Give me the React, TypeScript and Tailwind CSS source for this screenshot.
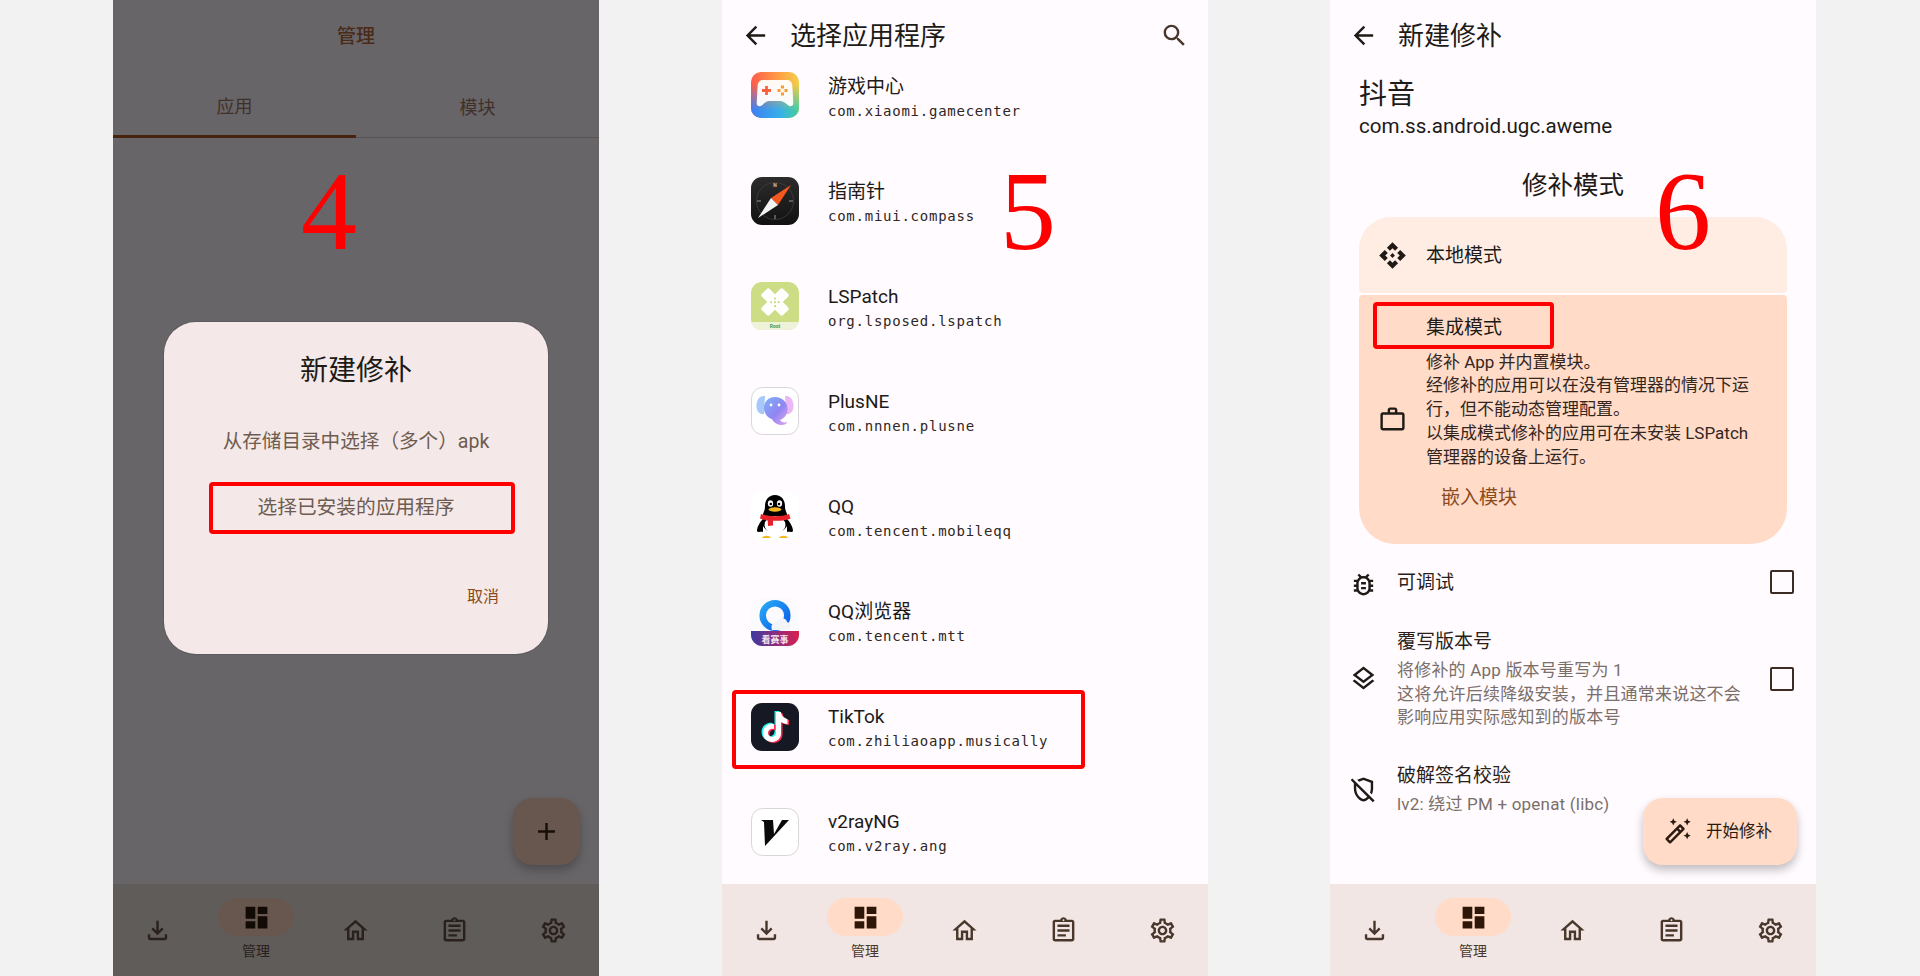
import type { FC, ReactNode } from 'react';
import {
  MdAdd,
  MdApi,
  MdArrowBack,
  MdDashboard,
  MdOutlineAssignment,
  MdOutlineAutoFixHigh,
  MdOutlineBugReport,
  MdOutlineFileDownload,
  MdOutlineHome,
  MdOutlineLayers,
  MdOutlineRemoveModerator,
  MdOutlineSettings,
  MdOutlineWorkOutline,
  MdSearch,
} from 'react-icons/md';

const GameIcon = () => (
  <svg viewBox="0 0 48 48" className="size-12">
    <defs>
      <linearGradient id="gameTop" x1="0" y1="0" x2="1" y2="0">
        <stop offset="0" stopColor="#ff5a4c" />
        <stop offset="0.55" stopColor="#ff9a45" />
        <stop offset="1" stopColor="#f3d04a" />
      </linearGradient>
      <linearGradient id="gameBottom" x1="0" y1="0" x2="1" y2="0">
        <stop offset="0" stopColor="#3c7ff6" />
        <stop offset="0.6" stopColor="#36b0ea" />
        <stop offset="1" stopColor="#46cf9c" />
      </linearGradient>
      <linearGradient id="gameFade" x1="0" y1="0" x2="0" y2="1">
        <stop offset="0.25" stopColor="#fff" stopOpacity="0" />
        <stop offset="0.8" stopColor="#fff" stopOpacity="1" />
      </linearGradient>
      <mask id="gameMask">
        <rect width="48" height="48" fill="url(#gameFade)" />
      </mask>
    </defs>
    <rect width="48" height="46" rx="10" fill="url(#gameTop)" />
    <rect width="48" height="46" rx="10" fill="url(#gameBottom)" mask="url(#gameMask)" />
    <path
      d="M12 8h24c3 0 5 2 5.300 5l1 18c.2 3-3 4-5 2.500-2.500-2-4-4-7.300-4.500h-12c-3.300.5-4.800 2.500-7.300 4.500-2 1.500-5.200.5-5-2.500l1-18C7 10 9 8 12 8z"
      fill="#fff"
      fillOpacity="0.95"
    />
    <path d="M15.500 14v9M11 18.500h9" stroke="#f9603f" strokeWidth="2.800" />
    <g fill="#ff9a2e">
      <rect x="30" y="13.500" width="3" height="3" />
      <rect x="30" y="20.500" width="3" height="3" />
      <rect x="26.500" y="17" width="3" height="3" />
      <rect x="33.500" y="17" width="3" height="3" />
    </g>
  </svg>
);

const CompassIcon = () => (
  <svg viewBox="0 0 48 48" className="size-12">
    <defs>
      <linearGradient id="compassBg" x1="0" y1="0" x2="0" y2="1">
        <stop offset="0" stopColor="#2c2c2c" />
        <stop offset="1" stopColor="#111" />
      </linearGradient>
    </defs>
    <rect width="48" height="48" rx="11" fill="url(#compassBg)" />
    <circle cx="24" cy="24" r="18.500" fill="none" stroke="#444" strokeWidth="0.700" />
    <path d="M6 24h4M38 24h4M24 38v4" stroke="#999" strokeWidth="1" />
    <text x="24" y="10" fontSize="5" fontWeight="700" fill="#ccc" textAnchor="middle" fontFamily="Roboto">
      N
    </text>
    <path d="M40 8 27 28 20 21z" fill="#f4581f" />
    <path d="M7 41 20 21 27 28z" fill="#f5f5f5" />
  </svg>
);

const LspatchIcon = () => (
  <svg viewBox="0 0 48 48" className="size-12">
    <rect width="48" height="48" rx="11" fill="#cddd86" />
    <path d="M0 40h48v-2c0 0 0 10-11 10H11C0 48 0 38 0 38z" fill="#eef2d8" />
    <rect x="18.500" y="5" width="11" height="30" rx="2" transform="rotate(45 24 20)" fill="#fff" />
    <rect x="18.500" y="5" width="11" height="30" rx="2" transform="rotate(-45 24 20)" fill="#fff" />
    <g fill="#cddd86">
      <rect x="23" y="15.500" width="2" height="2" />
      <rect x="23" y="23" width="2" height="2" />
      <rect x="19.200" y="19.200" width="2" height="2" />
      <rect x="26.800" y="19.200" width="2" height="2" />
      <rect x="23" y="19.200" width="2" height="2" />
    </g>
    <text x="24" y="46" fontSize="5" fontWeight="700" fill="#4a9a50" textAnchor="middle" fontFamily="Roboto">
      Root
    </text>
  </svg>
);

const PlusneIcon = () => (
  <svg viewBox="0 0 48 48" className="size-12">
    <defs>
      <linearGradient id="plusneBody" x1="0" y1="0" x2="1" y2="1">
        <stop offset="0" stopColor="#7fb2f5" />
        <stop offset="0.55" stopColor="#8f86f2" />
        <stop offset="1" stopColor="#e6a4ee" />
      </linearGradient>
    </defs>
    <rect x="0.500" y="0.500" width="47" height="47" rx="11" fill="#fff" stroke="#d8d6d8" />
    <path d="M14 9C8 8 5 14 5.500 20c.3 4 3 8 7.500 7z" fill="#a9c8fa" />
    <path d="M34 9c6-1 9 5 8.500 11-.3 4-3 8-7.500 7z" fill="#eab8f4" />
    <path
      d="M24 10c-7 0-11.500 5-11 12 .5 5 4 9 8 10 1 2.500 4 5.500 9 6 3 .3 6-1 6-3-3 1-6 0-7-2 5-2 7.500-6 7.500-11C36.500 15 31 10 24 10z"
      fill="url(#plusneBody)"
    />
    <circle cx="20" cy="18" r="1.400" fill="#fff" />
    <circle cx="28" cy="18" r="1.400" fill="#fff" />
  </svg>
);

const QqIcon = () => (
  <svg viewBox="0 0 48 48" className="size-12">
    <rect width="48" height="48" rx="11" fill="#fff" />
    <path d="M12 40c-2-1-5 1-6-1 0-4 3-9 6-12zM36 40c2-1 5 1 6-1 0-4-3-9-6-12z" fill="#000" />
    <path d="M24 3c-6.500 0-10 5-10 11 0 4-1 5-2 8v12c3 5 8 7 12 7s9-2 12-7V22c-1-3-2-4-2-8 0-6-3.500-11-10-11z" fill="#000" />
    <ellipse cx="24" cy="33" rx="10.500" ry="9" fill="#fff" />
    <ellipse cx="19.500" cy="11.500" rx="2.600" ry="3.300" fill="#fff" />
    <ellipse cx="28.500" cy="11.500" rx="2.600" ry="3.300" fill="#fff" />
    <circle cx="19.800" cy="12" r="1.300" fill="#000" />
    <circle cx="28" cy="12" r="1.300" fill="#000" />
    <ellipse cx="24" cy="17.500" rx="6.500" ry="2.200" fill="#f5b81f" />
    <path d="M10 22c8 3 20 3 28 0l1.500 4.500c-3 1.500-7 2-10 2.300H22v4.700l-5 .5-.3-5.500c-3-.5-5.500-1-7.700-2z" fill="#e8202a" />
    <path d="M11 46c1-3 8-3 9 0zM28 46c1-3 8-3 9 0z" fill="#f5b81f" />
  </svg>
);

const QqBrowserIcon = () => (
  <svg viewBox="0 0 48 48" className="size-12">
    <defs>
      <linearGradient id="qbRing" x1="0" y1="0" x2="1" y2="1">
        <stop offset="0" stopColor="#26a7f5" />
        <stop offset="1" stopColor="#0b5fe8" />
      </linearGradient>
      <linearGradient id="qbBand" x1="0" y1="0" x2="1" y2="0">
        <stop offset="0" stopColor="#3d3a9e" />
        <stop offset="0.5" stopColor="#8d2d80" />
        <stop offset="1" stopColor="#d91f4d" />
      </linearGradient>
    </defs>
    <rect width="48" height="48" rx="11" fill="#fbfafc" />
    <circle cx="24" cy="17.500" r="12.300" fill="none" stroke="url(#qbRing)" strokeWidth="6.500" />
    <path d="M21 32h15c5 0 5-7 0-8-1-5-8-5-10 0-3 .5-7 2-5 8z" fill="#f2f4f8" />
    <path d="M0 33h48v4c0 6-5 11-11 11H11C5 48 0 43 0 37z" fill="url(#qbBand)" />
    <text x="24" y="44.500" fontSize="9" fontWeight="700" fill="#fff" fillOpacity="0.9" textAnchor="middle" fontFamily="Noto Sans CJK SC">
      看赛事
    </text>
  </svg>
);

const TiktokIcon = () => {
  const note = 'M25 9h5c.5 4 3 6.500 6.500 7v5c-2.500 0-4.800-.8-6.500-2v11c0 5.500-4 9-9 9s-9-4-9-9c0-6 5.500-10 11-9v5c-3-1-6 1-6 4 0 2.300 1.800 4 4 4s4-1.800 4-4z';
  return (
    <svg viewBox="0 0 48 48" className="size-12">
      <rect width="48" height="48" rx="11" fill="#161823" />
      <path d={note} fill="#25f4ee" transform="translate(-1.500 -1)" />
      <path d={note} fill="#fe2c55" transform="translate(1.500 1)" />
      <path d={note} fill="#fff" />
    </svg>
  );
};

const V2rayIcon = () => (
  <svg viewBox="0 0 48 48" className="size-12">
    <rect x="0.500" y="0.500" width="47" height="47" rx="11" fill="#fff" stroke="#d8d6d8" />
    <path d="M10 12h12l1 14 8-14h7L14 38l-1-24z" fill="#0a0a0a" />
  </svg>
);

const apps: { name: string; pkg: string; icon: ReactNode }[] = [
  { name: '游戏中心', pkg: 'com.xiaomi.gamecenter', icon: <GameIcon /> },
  { name: '指南针', pkg: 'com.miui.compass', icon: <CompassIcon /> },
  { name: 'LSPatch', pkg: 'org.lsposed.lspatch', icon: <LspatchIcon /> },
  { name: 'PlusNE', pkg: 'com.nnnen.plusne', icon: <PlusneIcon /> },
  { name: 'QQ', pkg: 'com.tencent.mobileqq', icon: <QqIcon /> },
  { name: 'QQ浏览器', pkg: 'com.tencent.mtt', icon: <QqBrowserIcon /> },
  { name: 'TikTok', pkg: 'com.zhiliaoapp.musically', icon: <TiktokIcon /> },
  { name: 'v2rayNG', pkg: 'com.v2ray.ang', icon: <V2rayIcon /> },
];

interface BottomNavProps {
  dim?: boolean;
}

const BottomNav: FC<BottomNavProps> = ({ dim }) => {
  const iconColor = dim ? 'text-[#2a211c]' : 'text-[#4a372c]';
  return (
    <nav className={`flex h-[92px] shrink-0 justify-center pr-[2px] ${dim ? 'bg-[#605c5a]' : 'bg-[#f1e6e4]'}`}>
      <div className={`flex w-[99px] shrink-0 items-center justify-center ${iconColor}`}>
        <MdOutlineFileDownload size={29} />
      </div>
      <div className="flex w-[99px] shrink-0 flex-col items-center pt-[14px]">
        <div className={`flex h-[38px] w-[76px] items-center justify-center rounded-full ${dim ? 'bg-[#68574f] text-[#120a05]' : 'bg-[#ffdbc8] text-[#2e1708]'}`}>
          <MdDashboard size={29} />
        </div>
        <span className={`mt-[6px] text-[14px] leading-[18px] ${dim ? 'text-[#2a211c]' : 'text-[#4a372c]'}`}>管理</span>
      </div>
      <div className={`flex w-[99px] shrink-0 items-center justify-center ${iconColor}`}>
        <MdOutlineHome size={29} />
      </div>
      <div className={`flex w-[99px] shrink-0 items-center justify-center ${iconColor}`}>
        <MdOutlineAssignment size={29} />
      </div>
      <div className={`flex w-[99px] shrink-0 items-center justify-center ${iconColor}`}>
        <MdOutlineSettings size={29} />
      </div>
    </nav>
  );
};

const StepNumber: FC<{ value: string; className: string }> = ({ value, className }) => (
  <span className={`absolute top-[155px] font-['Liberation_Serif',serif] text-[112px] leading-[112px] text-[#ff0000] ${className}`}>{value}</span>
);

const ManagePanel = () => (
  <section className="relative flex h-[976px] w-[486px] shrink-0 flex-col bg-[#676568]">
    <header className="flex h-[72px] shrink-0 items-center justify-center pt-[2px] text-[19px] font-medium text-[#4a2a18]">管理</header>
    <div className="flex h-[66px] shrink-0 border-b border-[#575253] text-[18px] text-[#41302a]">
      <div className="-mb-px flex flex-1 items-center justify-center border-b-[3px] border-[#47220f] pt-[5px]">应用</div>
      <div className="flex flex-1 items-center justify-center pt-[5px]">模块</div>
    </div>
    <div className="flex-1" />
    <BottomNav dim />
    <StepNumber value="4" className="left-[188px]" />
    <div className="absolute top-[322px] left-[51px] flex h-[332px] w-[384px] flex-col items-center rounded-[32px] bg-[#f4e9e8] pt-[31px] shadow-[0_0_0_1px_#5d5a5d]">
      <h2 className="text-[28px] leading-[36px] text-[#201a17]">新建修补</h2>
      <p className="mt-[41px] text-[19.600px] leading-[24px] text-[#6e5c50]">从存储目录中选择（多个）apk</p>
      <p className="mt-[42px] text-[19.700px] leading-[24px] text-[#6e5c50]">选择已安装的应用程序</p>
      <span className="mt-[65px] mr-[49px] self-end text-[16px] leading-[24px] text-[#8b4a20]">取消</span>
      <div className="absolute top-[160px] left-[45px] h-[52px] w-[306px] rounded-[4px] border-4 border-[#ff0000]" />
    </div>
    <div className="absolute top-[798px] left-[400px] flex size-[67px] items-center justify-center rounded-[20px] bg-[#68574f] text-[#180e08] shadow-[0_5px_10px_rgba(0,0,0,0.25)]">
      <MdAdd size={29} />
    </div>
  </section>
);

const AppListPanel = () => (
  <section className="relative ml-[123px] flex h-[976px] w-[486px] shrink-0 flex-col bg-[#fffbff]">
    <header className="relative z-10 flex h-[70px] shrink-0 items-center justify-between pr-[19px] pl-[19px] text-[#201a17]">
      <div className="flex items-center gap-[20px]">
        <MdArrowBack size={29} />
        <h1 className="pt-[2px] text-[26px] leading-[34px]">选择应用程序</h1>
      </div>
      <MdSearch size={29} className="text-[#4a372c]" />
    </header>
    <div className="flex-1 overflow-hidden">
      <ul className="-mt-[25.500px]">
        {apps.map(app => (
          <li key={app.pkg} className="flex h-[105.100px] items-center gap-[29px] pl-[29px]">
            <div className="mb-[2px] size-12 shrink-0">{app.icon}</div>
            <div className="pt-[1px]">
              <div className="text-[19px] leading-[24px] text-[#201a17]">{app.name}</div>
              <div className="mt-[2px] font-['DejaVu_Sans_Mono',monospace] text-[14px] leading-[20px] tracking-[0.75px] text-[#2f2723]">{app.pkg}</div>
            </div>
          </li>
        ))}
      </ul>
    </div>
    <BottomNav />
    <StepNumber value="5" className="left-[278px]" />
    <div className="absolute top-[690px] left-[10px] h-[79px] w-[353px] rounded-[4px] border-4 border-[#ff0000]" />
  </section>
);

const OptionRow: FC<{ icon: ReactNode; title: string; lines?: string[]; checkbox?: boolean; className: string }> = ({ icon, title, lines, checkbox, className }) => (
  <div className={`flex items-center pr-[22px] pl-[19px] ${className}`}>
    <div className="shrink-0 text-[#201a17]">{icon}</div>
    <div className="ml-[19px] flex-1">
      <div className="text-[19px] leading-[24px] text-[#2b1f19]">{title}</div>
      {lines && (
        <div className="mt-[5px] text-[17px] leading-[23.700px] tracking-[0.2px] text-[#7a6f69]">
          {lines.map(line => (
            <div key={line}>{line}</div>
          ))}
        </div>
      )}
    </div>
    {checkbox && <div className="mb-[2px] size-[24px] shrink-0 rounded-[2px] border-[2.500px] border-[#3d2c24]" />}
  </div>
);

const integratedLines = ['修补 App 并内置模块。', '经修补的应用可以在没有管理器的情况下运', '行，但不能动态管理配置。', '以集成模式修补的应用可在未安装 LSPatch', '管理器的设备上运行。'];

const NewPatchPanel = () => (
  <section className="relative ml-[122px] flex h-[976px] w-[486px] shrink-0 flex-col bg-[#fffbff]">
    <header className="flex h-[70px] shrink-0 items-center gap-[20px] pl-[19px] text-[#201a17]">
      <MdArrowBack size={29} />
      <h1 className="pt-[2px] text-[26px] leading-[34px]">新建修补</h1>
    </header>
    <div className="flex-1 overflow-hidden">
      <div className="mt-[7px] pl-[29px] text-[#201a17]">
        <div className="text-[28px] leading-[36px]">抖音</div>
        <div className="text-[20.600px] leading-[27px]">com.ss.android.ugc.aweme</div>
      </div>
      <h2 className="mt-[27px] text-center text-[25.500px] leading-[36px] text-[#201a17]">修补模式</h2>
      <div className="mt-[14px] ml-[29px] flex h-[76px] w-[428px] items-center gap-[19px] rounded-t-[32px] rounded-b-[4px] bg-[#ffede4] pl-[19px] text-[#201a17]">
        <MdApi size={29} />
        <span className="pt-[2px] text-[19px]">本地模式</span>
      </div>
      <div className="mt-[2px] ml-[29px] flex h-[249px] w-[428px] items-center gap-[19px] rounded-t-[4px] rounded-b-[36px] bg-[#ffdbc8] pl-[19px] text-[#201a17]">
        <MdOutlineWorkOutline size={29} className="shrink-0" />
        <div className="self-start whitespace-nowrap pt-[21px]">
          <div className="text-[19px] leading-[24px]">集成模式</div>
          <div className="mt-[10.500px] text-[17px] leading-[23.800px] text-[#33261e]">
            {integratedLines.map(line => (
              <div key={line}>{line}</div>
            ))}
          </div>
          <div className="mt-[17px] ml-[15px] text-[19px] leading-[24px] text-[#8b4a20]">嵌入模块</div>
        </div>
      </div>
      <OptionRow className="mt-[27px] h-[24px]" icon={<MdOutlineBugReport size={29} className="mt-[2px]" />} title="可调试" checkbox />
      <OptionRow
        className="mt-[35px]"
        icon={<MdOutlineLayers size={29} className="mb-[4px]" />}
        title="覆写版本号"
        lines={['将修补的 App 版本号重写为 1', '这将允许后续降级安装，并且通常来说这不会', '影响应用实际感知到的版本号']}
        checkbox
      />
      <OptionRow className="mt-[34px]" icon={<MdOutlineRemoveModerator size={29} className="mb-[2px]" />} title="破解签名校验" lines={['lv2: 绕过 PM + openat (libc)']} />
    </div>
    <BottomNav />
    <StepNumber value="6" className="left-[325px]" />
    <div className="absolute top-[302px] left-[43px] h-[47px] w-[181px] rounded-[4px] border-4 border-[#ff0000]" />
    <div className="absolute top-[798px] left-[313px] flex h-[67px] w-[154px] items-center gap-[14px] rounded-[20px] bg-[#ffdbc8] pl-[20px] text-[#2b1a10] shadow-[0_5px_10px_rgba(0,0,0,0.25)]">
      <MdOutlineAutoFixHigh size={29} />
      <span className="pt-[2px] text-[16.500px]">开始修补</span>
    </div>
  </section>
);

export default function App() {
  return (
    <div className="flex h-[976px] w-[1920px] overflow-hidden bg-[#f2f2f2] pl-[113px] font-['Roboto','Noto_Sans_CJK_SC',sans-serif]">
      <ManagePanel />
      <AppListPanel />
      <NewPatchPanel />
    </div>
  );
}
